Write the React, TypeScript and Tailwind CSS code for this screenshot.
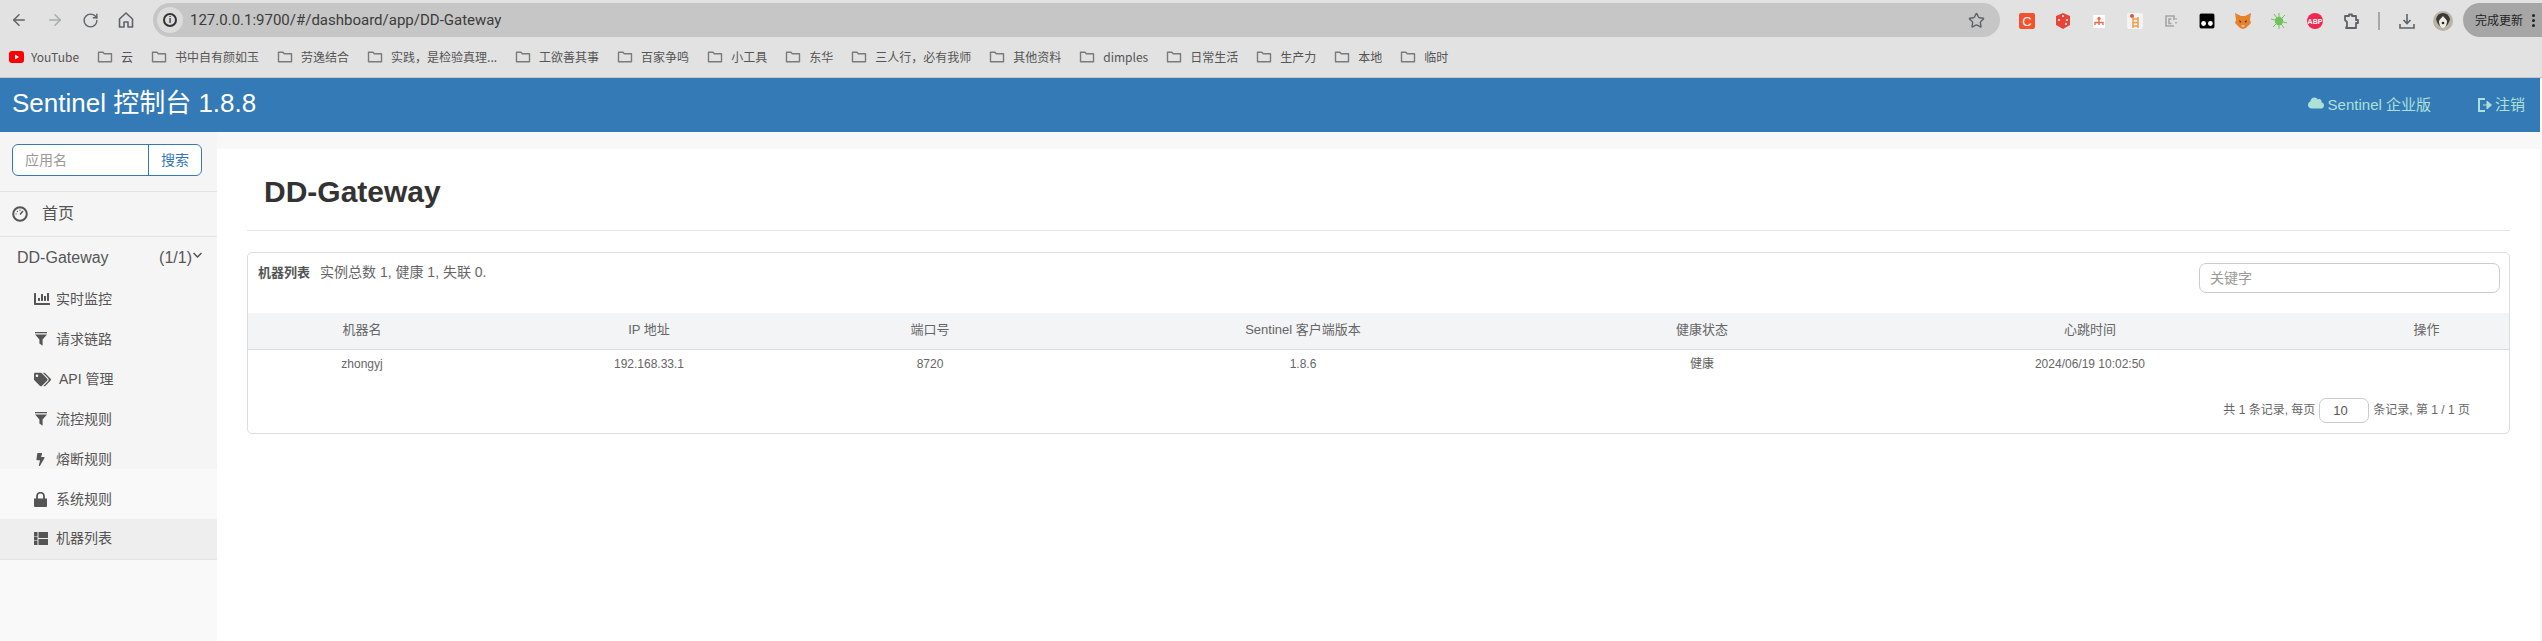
import { ArrowLeft, ArrowRight, RotateCw, Star } from "lucide-react";
import { FaChartBar, FaTags, FaBolt, FaCloud } from "react-icons/fa";
import type { ReactNode } from "react";

const font = "font-['Liberation_Sans','Noto_Sans_CJK_SC',sans-serif]";

const bookmarks = ["云", "书中自有颜如玉", "劳逸结合", "实践，是检验真理...", "工欲善其事", "百家争鸣", "小工具", "东华", "三人行，必有我师", "其他资料", "dimples", "日常生活", "生产力", "本地", "临时"];

const columns = [
  { name: "机器名", value: "zhongyj", width: "w-[228px]" },
  { name: "IP 地址", value: "192.168.33.1", width: "w-[346px]" },
  { name: "端口号", value: "8720", width: "w-[216px]" },
  { name: "Sentinel 客户端版本", value: "1.8.6", width: "w-[530px]" },
  { name: "健康状态", value: "健康", width: "w-[268px]" },
  { name: "心跳时间", value: "2024/06/19 10:02:50", width: "w-[508px]" },
  { name: "操作", value: "", width: "w-[165px]" },
];

function Folder() {
  return (
    <svg width="16" height="16" viewBox="0 0 16 16" fill="none" stroke="#7a7a7a" strokeWidth="1.4" className="shrink-0">
      <path d="M1.5 3.2h4.4l1.4 1.6h7.2v8H1.5z" strokeLinejoin="round" />
    </svg>
  );
}

function Ext({ children }: { children: ReactNode }) {
  return <div className="flex h-4 w-9 items-center justify-center">{children}</div>;
}

function Extensions() {
  return (
    <div className="flex items-center">
      <Ext>
        <div className="flex h-4 w-4 items-center justify-center rounded-[2px] bg-[#f4512c] font-['Liberation_Sans',sans-serif] text-[13px] leading-none text-white">C</div>
      </Ext>
      <Ext>
        <svg width="16" height="16" viewBox="0 0 16 16">
          <path d="M8 0l7 3v9l-7 4-7-4V3z" fill="#e8443a" />
          <circle cx="8" cy="3" r="1" fill="#fff" />
          <circle cx="4" cy="7" r="1" fill="#fff" />
          <circle cx="12" cy="7" r="1" fill="#fff" />
          <circle cx="11" cy="11" r="1" fill="#fff" />
        </svg>
      </Ext>
      <Ext>
        <svg width="12" height="13" viewBox="0 0 12 13">
          <rect width="12" height="13" rx="1" fill="#fff" />
          <circle cx="6" cy="3.5" r="1.7" fill="#ef6a4c" />
          <path d="M2 10V7.5h8V10M6 5v5" fill="none" stroke="#ef6a4c" strokeWidth="1.4" />
        </svg>
      </Ext>
      <Ext>
        <svg width="16" height="16" viewBox="0 0 16 16">
          <rect width="16" height="16" rx="2" fill="#f4f4f4" />
          <circle cx="5" cy="3" r="2" fill="#e8503a" />
          <path d="M6 4v11M11 4v11M6 6h5M6 9.5h5M6 13h5" stroke="#f39a4a" strokeWidth="1.5" fill="none" />
        </svg>
      </Ext>
      <Ext>
        <svg width="12" height="12" viewBox="0 0 12 12" fill="none" stroke="#a5a5a5" strokeWidth="1.6">
          <path d="M9 11H1V1h8v4M6.5 8.5H4V4h2.500M11 3v1.500M11 7v1.500" />
        </svg>
      </Ext>
      <Ext>
        <svg width="16" height="16" viewBox="0 0 16 16">
          <rect width="16" height="16" rx="2" fill="#000" stroke="#fff" />
          <circle cx="4.6" cy="10.5" r="2.4" fill="#fff" />
          <circle cx="11.4" cy="10.5" r="2.4" fill="#fff" />
        </svg>
      </Ext>
      <Ext>
        <svg width="16" height="16" viewBox="0 0 16 16">
          <path d="M0 0l6 3h4l6-3-1 7 1 3-3 3-2 2-3 1-3-1-2-2-3-3 1-3z" fill="#e8822a" />
          <path d="M4 7l2.500 1.500L5 10zM12 7L9.500 8.500 11 10z" fill="#5b3a1e" />
          <path d="M6.500 12h3l-.5 2H7z" fill="#d8c6b4" />
        </svg>
      </Ext>
      <Ext>
        <svg width="16" height="16" viewBox="0 0 16 16">
          <circle cx="8" cy="8" r="4.200" fill="#72c25c" />
          <path d="M8 0v16M0 6l16 4M2 14L14 2M3 1l10 14" stroke="#72c25c" strokeWidth="1" />
        </svg>
      </Ext>
      <Ext>
        <div className="flex h-4 w-4 items-center justify-center rounded-full bg-[#f0284f] font-['Liberation_Sans',sans-serif] text-[7px] font-bold leading-none text-white">ABP</div>
      </Ext>
      <Ext>
        <svg width="17" height="17" viewBox="0 0 17 17" fill="none" stroke="#5f6368" strokeWidth="1.8" strokeLinejoin="round">
          <path d="M2 3h4V1.500h3V3h4v4h2v3h-2v5H3l1-2V9L2 7z" />
        </svg>
      </Ext>
      <div className="mx-[9px] h-[18px] w-[2px] bg-[#a8a8a8]" />
      <Ext>
        <svg width="16" height="16" viewBox="0 0 16 16" fill="none" stroke="#5f6368" strokeWidth="1.6">
          <path d="M8 1v9M4.500 7L8 10.500 11.500 7M1 11v4h14v-4" />
        </svg>
      </Ext>
      <Ext>
        <svg width="20" height="20" viewBox="0 0 20 20">
          <circle cx="10" cy="10" r="10" fill="#b9b2a6" />
          <path d="M10 2c-3.500 0-6 2-7 6 1 4 3 8 7 8s6-4 7-8c-1-4-3.500-6-7-6z" fill="#3b3936" />
          <path d="M10 5c-1 2-3.500 3-4 5 0 4 2 7 4 7s4-3 4-7c-.5-2-3-3-4-5z" fill="#efece6" />
          <circle cx="10" cy="12" r="1.300" fill="#222" />
        </svg>
      </Ext>
    </div>
  );
}

function ChromeBar() {
  return (
    <div className="shrink-0 bg-[#e2e2e2]">
      <div className="flex h-[37px] items-start">
        <div className="flex h-[34px] w-[153px] shrink-0 items-center gap-[18px] pl-[10px] pt-[6px] text-[#5f6368]">
          <ArrowLeft size={18} />
          <ArrowRight size={18} className="text-[#a9abad]" />
          <RotateCw size={17} />
          <svg width="18" height="18" viewBox="0 0 18 18" fill="none" stroke="#5f6368" strokeWidth="1.6">
            <path d="M2.500 8L9 2l6.500 6v8H11v-5H7v5H2.500z" strokeLinejoin="round" />
          </svg>
        </div>
        <div className="mt-[3px] flex h-[34px] w-[1847px] shrink-0 items-center rounded-full bg-[#c6c6c6] pl-[4px] pr-[15px]">
          <div className="flex h-[26px] w-[26px] items-center justify-center rounded-full bg-[#dcdcdc]">
            <div className="flex h-[14px] w-[14px] items-center justify-center rounded-full border-2 border-[#333] font-['Liberation_Sans',sans-serif] text-[9px] font-bold leading-none text-[#333]">i</div>
          </div>
          <span className="ml-[7px] font-['Roboto',sans-serif] text-[15px] text-[#3c3c3c]">127.0.0.1:9700/#/dashboard/app/DD-Gateway</span>
          <Star size={17} className="ml-auto text-[#5f6368]" />
        </div>
        <div className="ml-[9px] mt-[12px] shrink-0">
          <Extensions />
        </div>
        <div className="ml-[2px] mt-[3px] flex h-[34px] flex-1 items-center rounded-l-full bg-[#a6a6a6] pl-[12px] font-['Noto_Sans_CJK_SC',sans-serif] text-[12px] text-[#222]">
          <span>完成更新</span>
          <span className="ml-[9px] flex flex-col gap-[2px]">
            <i className="h-[3px] w-[3px] rounded-full bg-[#222]" />
            <i className="h-[3px] w-[3px] rounded-full bg-[#222]" />
            <i className="h-[3px] w-[3px] rounded-full bg-[#222]" />
          </span>
        </div>
      </div>
      <div className="flex h-[41px] items-center gap-[18px] border-b border-[#c2c6ca] pb-[1px] pl-[9px] font-['Noto_Sans_CJK_SC',sans-serif] text-[12px] text-[#555]">
        <div className="flex items-center gap-[7px]">
          <svg width="15" height="12" viewBox="0 0 15 12">
            <rect width="15" height="12" rx="3" fill="#f00" />
            <path d="M6 3.500v5l4-2.500z" fill="#fff" />
          </svg>
          <span>YouTube</span>
        </div>
        {bookmarks.map((b) => (
          <div key={b} className="flex items-center gap-[8px]">
            <Folder />
            <span className="whitespace-nowrap">{b}</span>
          </div>
        ))}
      </div>
    </div>
  );
}

function Dashboard() {
  return (
    <svg width="16" height="16" viewBox="0 0 16 16" fill="none" stroke="#555" className="shrink-0">
      <circle cx="8" cy="8" r="6.800" strokeWidth="2" />
      <path d="M8 8.500l3-3.500" strokeWidth="1.500" />
      <path d="M3.500 8h1.200M8 3.500v1.200M5 5l.8.8" strokeWidth="1.200" />
    </svg>
  );
}

function Filter() {
  return (
    <svg width="14" height="14" viewBox="0 0 14 14" fill="currentColor">
      <path d="M1 0h12v1.200H1zM1 2.400h12L8.600 7.500v6.300L5.400 11.500v-4z" />
    </svg>
  );
}

function Lock() {
  return (
    <svg width="13" height="15" viewBox="0 0 13 15" fill="currentColor">
      <path d="M0 6.500h13v7.500a1 1 0 0 1-1 1H1a1 1 0 0 1-1-1z" />
      <path d="M3 7V4.200a3.500 3.500 0 0 1 7 0V7" fill="none" stroke="currentColor" strokeWidth="1.800" />
    </svg>
  );
}

function ThList() {
  return (
    <svg width="14" height="13" viewBox="0 0 14 13" fill="currentColor">
      <path d="M0 0h3.500v4H0zM0 4.500h3.500v4H0zM0 9h3.500v4H0zM4.500 0H14v6H4.500zM4.500 7H14v6H4.500z" />
    </svg>
  );
}

const menu: { icon: ReactNode; label: string; active?: boolean; offset?: string }[] = [
  { icon: <FaChartBar size={16} />, label: "实时监控" },
  { icon: <Filter />, label: "请求链路" },
  { icon: <FaTags size={17} />, label: "API 管理", offset: "ml-[3px]" },
  { icon: <Filter />, label: "流控规则" },
  { icon: <FaBolt size={13} />, label: "熔断规则" },
  { icon: <Lock />, label: "系统规则" },
  { icon: <ThList />, label: "机器列表", active: true },
];

function Sidebar() {
  return (
    <aside className="w-[217px] shrink-0 bg-[linear-gradient(#f5f5f5_0,#f5f5f5_337px,#f9f9f9_337px)] text-[#555]">
      <div className="h-[60px] border-b border-[#e3e3e3] px-[12px] pt-[12px]">
        <div className="flex h-[32px] w-[190px] rounded-[6px] border border-[#337ab7] bg-white text-[14px]">
          <div className="flex-1 pl-[12px] leading-[30px] text-[#999]">应用名</div>
          <div className="w-[53px] border-l border-[#337ab7] text-center leading-[30px] text-[#337ab7]">搜索</div>
        </div>
      </div>
      <div className="flex h-[45px] items-center gap-[14px] border-b border-[#e3e3e3] pl-[12px] text-[16px]">
        <Dashboard />
        <span>首页</span>
      </div>
      <div className="flex h-[41px] items-center pl-[17px] pr-[15px] text-[16px]">
        <span>DD-Gateway</span>
        <span className="ml-auto">(1/1)</span>
        <svg width="9" height="6" viewBox="0 0 9 6" fill="none" stroke="#555" strokeWidth="1.500" className="mb-[6px] ml-[1px]">
          <path d="M.5 1l4 4 4-4" />
        </svg>
      </div>
      <div className="flex flex-col pt-[1px]">
        {menu.map((m) => (
          <div key={m.label} className={m.active ? "flex h-[41px] items-center border-b border-[#e3e3e3] bg-[#eeeeee] pb-[1px] pl-[34px] text-[14px]" : "flex h-[40px] items-center pl-[34px] text-[14px]"}>
            <span className="flex w-[22px] justify-start">{m.icon}</span>
            <span className={m.offset}>{m.label}</span>
          </div>
        ))}
      </div>
    </aside>
  );
}

function MachineCard() {
  return (
    <div className="mt-[21px] h-[182px] rounded-[5px] border border-[#dddddd] text-[#666]">
      <div className="flex h-[60px] items-start justify-between pl-[10px] pr-[9px]">
        <div className="mt-[9px] flex items-center gap-[10px]">
          <span className="text-[13px] font-bold text-[#555]">机器列表</span>
          <span className="text-[14px]">实例总数 1, 健康 1, 失联 0.</span>
        </div>
        <div className="mt-[10px] h-[30px] w-[301px] rounded-[7px] border border-[#cccccc] pl-[10px] text-[14px] leading-[28px] text-[#999]">关键字</div>
      </div>
      <table className="w-full table-fixed border-collapse">
        <colgroup>
          {columns.map((c) => (
            <col key={c.name} className={c.width} />
          ))}
        </colgroup>
        <thead>
          <tr className="h-[36px] border-b border-[#dddddd] bg-[#f3f4f6]">
            {columns.map((c) => (
              <th key={c.name} className="pb-[2px] text-center text-[13px] font-normal">{c.name}</th>
            ))}
          </tr>
        </thead>
        <tbody>
          <tr className="h-[32px]">
            {columns.map((c) => (
              <td key={c.name} className="pb-[2px] text-center text-[12px]">{c.value}</td>
            ))}
          </tr>
        </tbody>
      </table>
      <div className="mt-[17px] flex items-center justify-end pr-[39px] text-[12px]">
        <span className="mb-[1px]">共 1 条记录, 每页</span>
        <div className="mx-[4px] h-[25px] w-[50px] rounded-[7px] border border-[#cccccc] pl-[13px] text-[13px] leading-[23px] text-[#555]">10</div>
        <span className="mb-[1px]">条记录, 第 1 / 1 页</span>
      </div>
    </div>
  );
}

export default function App() {
  return (
    <div className={`flex h-screen flex-col overflow-hidden bg-[#f8f8f8] ${font}`}>
      <ChromeBar />
      <div className="flex flex-1 flex-col pr-[2px]">
        <nav className="flex h-[54px] shrink-0 items-center bg-[#337ab7] pl-[12px] pr-[15px] text-[#aee0d8]">
          <span className="mb-[4px] text-[26px] text-white">Sentinel 控制台 1.8.8</span>
          <span className="ml-auto flex items-center gap-[4px] text-[15px]">
            <FaCloud size={16} className="mb-[4px]" />
            Sentinel 企业版
          </span>
          <span className="ml-[46px] flex items-center gap-[2px] text-[15px]">
            <svg width="16" height="16" viewBox="0 0 16 16" fill="none" stroke="currentColor" strokeWidth="2">
              <path d="M8 2H2v12h6" />
              <path d="M6 8h5M10 4l4.500 4-4.500 4z" fill="currentColor" strokeWidth="1" />
            </svg>
            注销
          </span>
        </nav>
        <div className="flex flex-1">
          <Sidebar />
          <main className="flex-1 pt-[17px]">
            <div className="h-full bg-white px-[30px]">
              <div className="flex h-[82px] items-center border-b border-[#e5e5e5] pl-[17px] pt-[3px]">
                <h1 className="text-[30px] font-bold text-[#333]">DD-Gateway</h1>
              </div>
              <MachineCard />
            </div>
          </main>
        </div>
      </div>
    </div>
  );
}
